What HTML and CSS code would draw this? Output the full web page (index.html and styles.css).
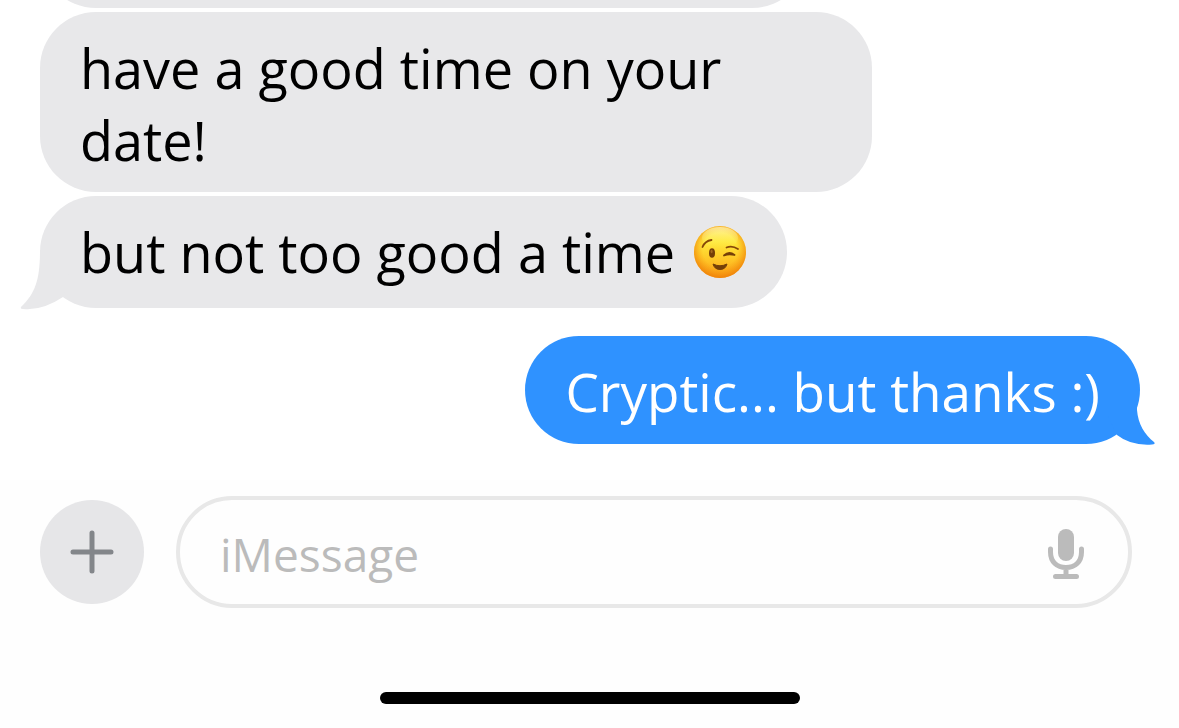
FILE: index.html
```html
<!DOCTYPE html>
<html lang="en">
<head>
<meta charset="utf-8">
<meta name="viewport" content="width=device-width, initial-scale=1">
<title>Messages</title>
<link rel="stylesheet" href="styles.css">
</head>
<body>
<main class="chat">
  <section class="thread" aria-label="Conversation">
    <div class="bubble received earlier"></div>
    <p class="bubble received wide">have a good time on your date!</p>
    <div class="bubble received">
      <svg class="tail tail-left" viewBox="0 0 50 70" aria-hidden="true"><path d="M20 0C20 28 16 43 1 57Q0 59 3 59Q22 61 43 47L50 20V0Z"/></svg>
      <p class="line">but not too good a time</p>
      <svg class="emoji" viewBox="0 0 54 54" role="img" aria-label="Winking face">
        <defs>
          <linearGradient id="face" x1="0" y1="0" x2="0" y2="1">
            <stop offset="0" stop-color="#ffe45c"/>
            <stop offset=".3" stop-color="#ffe93c"/>
            <stop offset=".62" stop-color="#ffc928"/>
            <stop offset="1" stop-color="#fb9d16"/>
          </linearGradient>
          <radialGradient id="rim" cx=".5" cy=".46" r=".55">
            <stop offset=".6" stop-color="#f79a10" stop-opacity="0"/>
            <stop offset="1" stop-color="#ed7d08" stop-opacity=".9"/>
          </radialGradient>
          <linearGradient id="shine" x1="0" y1="0" x2="0" y2="1">
            <stop offset="0" stop-color="#fffbd0" stop-opacity=".6"/>
            <stop offset="1" stop-color="#fff34a" stop-opacity="0"/>
          </linearGradient>
        </defs>
        <circle cx="27" cy="27" r="26" fill="url(#face)"/>
        <circle cx="27" cy="27" r="26" fill="url(#rim)"/>
        <ellipse cx="27" cy="13" rx="18" ry="11" fill="url(#shine)"/>
        <ellipse cx="19" cy="28" rx="3" ry="4.8" fill="#753f08"/>
        <ellipse cx="18.600" cy="26.500" rx="1" ry="1.700" fill="#a56a20"/>
        <path d="M9.500 22Q12 16 18.500 15" fill="none" stroke="#874808" stroke-width="1.800" stroke-linecap="round"/>
        <path d="M33.500 22.500Q39 20 45 24" fill="none" stroke="#874808" stroke-width="1.800" stroke-linecap="round"/>
        <path d="M31 30.500Q36 25.500 41.500 30Q36 28.500 31 30.500Z" fill="#753f08" stroke="#753f08" stroke-width="1.800" stroke-linejoin="round"/>
        <path d="M20 39Q27 42.500 34 39Q32.500 44.500 27 44.500Q21.500 44.500 20 39Z" fill="#753f08" stroke="#753f08" stroke-linejoin="round"/>
      </svg>
    </div>
    <div class="bubble sent">
      <svg class="tail tail-right" viewBox="0 0 50 70" aria-hidden="true"><path d="M0 0H29V34C30 48 37 59 46 66Q48 68 44 68.500Q23 70 9 59L0 40Z"/></svg>
      <p class="line">Cryptic... but thanks :)</p>
    </div>
  </section>
  <footer class="composer">
    <form class="entry">
      <button class="add" type="button" aria-label="Add attachment">
        <svg class="plus" viewBox="0 0 44 44" aria-hidden="true"><path d="M22 3V41M3 22H41"/></svg>
      </button>
      <div class="field">
        <input class="message" type="text" placeholder="iMessage" aria-label="iMessage">
        <button class="dictate" type="button" aria-label="Dictate">
          <svg class="mic" viewBox="0 0 36 50" aria-hidden="true">
            <rect class="capsule" x="10" y="0" width="16" height="32" rx="8"/>
            <path d="M2.500 20V23C2.500 33 9 38.500 18 38.500S33.500 33 33.500 23V20M18 38.500V47M7.500 47.500H28.500"/>
          </svg>
        </button>
      </div>
    </form>
    <div class="home-bar"></div>
  </footer>
</main>
</body>
</html>
```
FILE: styles.css
```css
* {
  box-sizing: border-box;
}

body {
  margin: 0;
  background: #fff;
  font-family: "Segoe UI", "Open Sans", sans-serif;
  color: #000;
}

.chat {
  display: flex;
  flex-direction: column;
  height: 100vh;
  overflow: hidden;
}

.thread {
  flex: 1;
  min-height: 0;
  display: flex;
  flex-direction: column;
  justify-content: flex-end;
  align-items: flex-start;
  gap: 4px;
  padding: 0 39px 36px 40px;
  overflow: hidden;
}

.bubble {
  position: relative;
  flex: none;
  display: flex;
  align-items: flex-start;
  gap: 18px;
  margin: 0;
  padding: 20px 40px 16px;
  border-radius: 56px;
  font-size: 54px;
  line-height: 72px;
}

.received {
  min-height: 112px;
  background: #e8e8ea;
}

.earlier {
  width: 70%;
  max-width: 768px;
}

.wide {
  max-width: 832px;
}

.sent {
  align-self: flex-end;
  margin-top: 24px;
  background: #2f92ff;
  color: #fff;
  font-size: 53px;
}

.line {
  position: relative;
  margin: 0;
}

.tail {
  position: absolute;
  width: 50px;
  height: 70px;
}

.tail-left {
  left: -20px;
  bottom: -12px;
  fill: #e8e8ea;
}

.tail-right {
  right: -18px;
  bottom: -2px;
  fill: #2f92ff;
}

.emoji {
  align-self: center;
  width: 54px;
  height: 54px;
  margin-bottom: 4px;
}

.composer {
  padding: 16px 0 24px;
  background: #fefefe;
}

.entry {
  display: flex;
  align-items: center;
  gap: 32px;
  padding: 0 47px 0 40px;
}

.add {
  display: grid;
  place-items: center;
  flex: none;
  width: 104px;
  height: 104px;
  padding: 0;
  border: 0;
  border-radius: 50%;
  background: #e6e6e8;
}

.plus {
  width: 44px;
  height: 44px;
  fill: none;
  stroke: #83868a;
  stroke-width: 5;
  stroke-linecap: round;
}

.field {
  display: flex;
  align-items: center;
  flex: 1;
  min-width: 0;
  height: 112px;
  padding: 4px 44px 0 40px;
  border: 4px solid #e8e8e8;
  border-radius: 56px;
  background: #fefefe;
}

.message {
  flex: 1;
  min-width: 0;
  height: 64px;
  padding: 0;
  border: 0;
  outline: 0;
  background: transparent;
  color: #000;
  font: inherit;
  font-size: 46px;
}

.message::placeholder {
  color: #bbb;
  opacity: 1;
}

.dictate {
  display: flex;
  padding: 0;
  border: 0;
  background: none;
}

.mic {
  width: 36px;
  height: 50px;
  fill: none;
  stroke: #bbb;
  stroke-width: 5;
  stroke-linecap: round;
}

.capsule {
  fill: #bbb;
  stroke: none;
}

.home-bar {
  width: 420px;
  max-width: 60%;
  height: 12px;
  margin: 84px auto 0;
  border-radius: 6px;
  background: #000;
}
```
